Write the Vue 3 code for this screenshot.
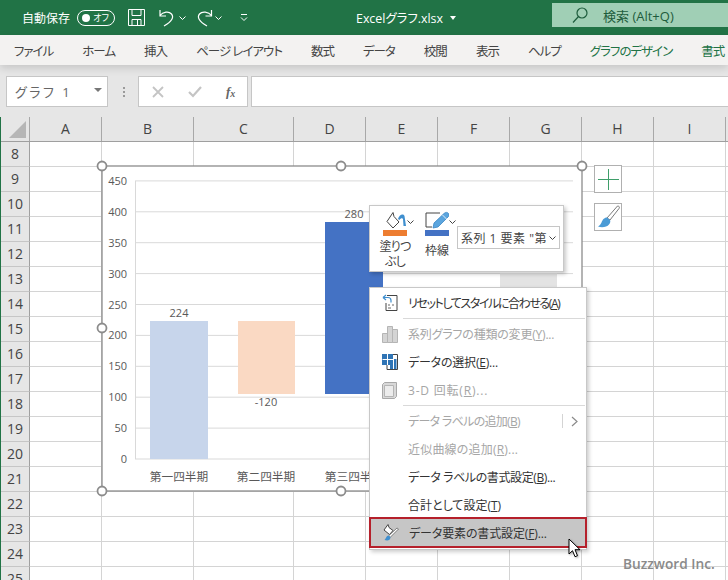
<script setup>
const tabs = [
  { name: "ファイル" },
  { name: "ホーム" },
  { name: "挿入" },
  { name: "ページ レイアウト" },
  { name: "数式" },
  { name: "データ" },
  { name: "校閲" },
  { name: "表示" },
  { name: "ヘルプ" },
  { name: "グラフのデザイン", accent: true },
  { name: "書式", accent: true },
];

const columns = ["A", "B", "C", "D", "E", "F", "G", "H", "I", ""];
const rows = [8, 9, 10, 11, 12, 13, 14, 15, 16, 17, 18, 19, 20, 21, 22, 23, 24, 25];

const axis = [450, 400, 350, 300, 250, 200, 150, 100, 50, 0];
const axisY = (v) => 459 - (v / 50) * 30.9;

const bars = [
  { x: 150, y: 321, w: 58, h: 138, color: "#c7d5eb" },
  { x: 238, y: 321, w: 57, h: 73, color: "#fad9c3" },
  { x: 325, y: 222, w: 58, h: 172, color: "#4472c4" },
  { x: 500, y: 273, w: 57, h: 60, color: "#e3e3e3" },
];

const labels = [
  { x: 179, y: 317, text: "224" },
  { x: 266, y: 406, text: "-120" },
  { x: 354, y: 218, text: "280" },
];

const categories = [
  { x: 179, text: "第一四半期" },
  { x: 266, text: "第二四半期" },
  { x: 354, text: "第三四半期" },
];

const handles = [
  [102, 166],
  [341, 166],
  [582, 166],
  [102, 328],
  [102, 491],
  [341, 491],
];

// track = letter spacing in px, the kana heavy rows run narrower in the original
const menu = [
  { icon: "reset", text: "リセットしてスタイルに合わせる(", key: "A", tail: ")", track: -1.4 },
  { sep: true },
  { icon: "bars", text: "系列グラフの種類の変更(", key: "Y", tail: ")...", off: true, track: -0.2 },
  { icon: "table", text: "データの選択(", key: "E", tail: ")...", track: -0.2 },
  { icon: "box", text: "3-D 回転(", key: "R", tail: ")...", off: true, track: 0.8 },
  { sep: true },
  { text: "データ ラベルの追加(", key: "B", tail: ")", off: true, sub: true, track: -0.7 },
  { text: "近似曲線の追加(", key: "R", tail: ")...", off: true, track: 0.2 },
  { text: "データ ラベルの書式設定(", key: "B", tail: ")...", track: -0.4 },
  { text: "合計として設定(", key: "T", tail: ")" },
  { icon: "format", text: "データ要素の書式設定(", key: "F", tail: ")...", active: true, track: -0.13 },
];
</script>

<template>
  <div class="app">
    <header class="titlebar">
      <span class="autosave">自動保存</span>
      <span class="toggle"><i class="dot"></i><span class="toggle-text">オフ</span></span>
      <svg class="qa save" width="17" height="17" viewBox="0 0 17 17" fill="none" stroke="#fff">
        <path d="M.5.5h16v16H.5z" />
        <path d="M4 .5v6h9v-6M4 16.500v-6h9v6M9.500 11v5" />
      </svg>
      <svg class="qa undo" width="16" height="18" viewBox="0 0 16 18" fill="none" stroke="#fff" stroke-width="1.200">
        <path d="M2 1v6h6M2 6.500C5 2.500 11 2 13.500 5c2.500 3 1 7-7.500 12" />
      </svg>
      <svg class="chev c1" width="7" height="4" viewBox="0 0 7 4" fill="none" stroke="#fff"><path d="M.5.5l3 3 3-3" /></svg>
      <svg class="qa redo" width="16" height="18" viewBox="0 0 16 18" fill="none" stroke="#fff" stroke-width="1.200">
        <path d="M14.500 1v6h-6M14.500 6.500C11.500 2.500 5 2 2.500 5c-2.500 3-1 7 7.500 12" />
      </svg>
      <svg class="chev c2" width="7" height="4" viewBox="0 0 7 4" fill="none" stroke="#fff"><path d="M.5.5l3 3 3-3" /></svg>
      <svg class="chev c3" width="8" height="7" viewBox="0 0 8 7" fill="none" stroke="#fff"><path d="M1 .5h6M1 3.500l3 3 3-3" /></svg>
      <span class="filename">Excelグラフ.xlsx</span>
      <i class="file-caret"></i>
      <div class="search">
        <svg width="16" height="17" viewBox="0 0 16 17" fill="none" stroke="#1d5c3c" stroke-width="1.200">
          <circle cx="10" cy="6" r="5" />
          <path d="M6.500 9.500L1 15.500" />
        </svg>
        <span>検索 (Alt+Q)</span>
      </div>
    </header>

    <nav class="tabs">
      <span v-for="tab in tabs" :key="tab.name" class="tab" :class="{ accent: tab.accent }">{{ tab.name }}</span>
    </nav>

    <section class="formula">
      <div class="namebox">
        <span>グラフ 1</span>
        <i class="name-caret"></i>
      </div>
      <div class="grip"><i></i><i></i><i></i></div>
      <div class="fxbox">
        <svg width="12" height="12" viewBox="0 0 12 12" fill="none" stroke="#c4c4c4" stroke-width="1.800"><path d="M1 1l10 10M11 1L1 11" /></svg>
        <svg width="14" height="12" viewBox="0 0 14 12" fill="none" stroke="#c4c4c4" stroke-width="2.200"><path d="M1 6l4 4 8-9" /></svg>
        <span class="fx">f<sub>x</sub></span>
      </div>
      <div class="input"></div>
    </section>

    <main class="sheet">
      <div class="col-head">
        <div class="corner"><i></i></div>
        <div v-for="col in columns" :key="col" class="col">{{ col }}</div>
      </div>
      <div v-for="row in rows" :key="row" class="row">
        <div class="row-num">{{ row }}</div>
        <div v-for="col in columns" :key="col" class="cell"></div>
      </div>

      <svg class="chart" viewBox="96 160 492 337">
        <rect x="102" y="166" width="480" height="325" fill="#fff" stroke="#8c8c8c" stroke-width="1.300" />
        <line v-for="v in axis" :key="v" x1="135" x2="573" :y1="axisY(v)" :y2="axisY(v)" stroke="#d9d9d9" />
        <line x1="135.500" x2="135.500" y1="181" y2="459" stroke="#d9d9d9" />
        <text v-for="v in axis" :key="'a' + v" class="tick" x="127" :y="axisY(v) + 4" text-anchor="end">{{ v }}</text>
        <rect v-for="b in bars" :key="b.x" :x="b.x" :y="b.y" :width="b.w" :height="b.h" :fill="b.color" />
        <text v-for="l in labels" :key="l.text" class="tick" :x="l.x" :y="l.y" text-anchor="middle">{{ l.text }}</text>
        <text v-for="c in categories" :key="c.text" class="cat" :x="c.x" y="481" text-anchor="middle">{{ c.text }}</text>
        <circle v-for="h in handles" :key="h.join()" :cx="h[0]" :cy="h[1]" r="4.500" fill="#fff" stroke="#8c8c8c" stroke-width="1.800" />
      </svg>

      <button class="side plus">
        <svg width="21" height="21" viewBox="0 0 21 21" stroke="#3f9e6a"><path d="M10.500 0v21M0 10.500h21" /></svg>
      </button>
      <button class="side brush">
        <svg width="25" height="25" viewBox="0 0 25 25">
          <path d="M21.500 1C23 1 24 2 23 3.500L14 15l-3-2z" fill="#fff" stroke="#6b6b6b" stroke-width=".9" />
          <path d="M11 12.500c-3 0-4.500 2.500-5.500 5-.5 1.500-2 3-3.500 4 4 1.500 9 .5 11-2 1.500-1.500 1.500-4 1-4.500z" fill="#4a9bd6" />
        </svg>
      </button>
    </main>

    <div class="mini">
      <div class="mini-btn fill">
        <svg width="24" height="25" viewBox="0 0 24 25">
          <path d="M4 10.500L10 1.500l1 4 5 5.500-6 6z" fill="#fff" stroke="#444" />
          <path d="M15 8c1-4 5-6 6.500-3L23 15h-2.500L20 8c-.5-1.500-2.500-1-3.500 1z" fill="#3f8fcf" />
          <rect y="19" width="24" height="6" fill="#ed7d31" />
        </svg>
        <span class="mini-label">塗りつ<br />ぶし</span>
      </div>
      <svg class="mini-chev first" width="7" height="4" viewBox="0 0 7 4" fill="none" stroke="#444"><path d="M.5.5l3 3 3-3" /></svg>
      <div class="mini-btn line">
        <svg width="24" height="25" viewBox="0 0 24 25">
          <path d="M15 2H1v14h6" fill="none" stroke="#444" />
          <path d="M8 17l1-5L19 2.500c1.500-1.500 3.500-1.500 4.500 0s.5 2.500-.5 3.500L13 16z" fill="#5ba5de" stroke="#3b87c4" stroke-width=".8" />
          <path d="M17.500 4l4 4" stroke="#fff" stroke-width=".8" />
          <rect y="19" width="24" height="6" fill="#4472c4" />
        </svg>
        <span class="mini-label">枠線</span>
      </div>
      <svg class="mini-chev second" width="7" height="4" viewBox="0 0 7 4" fill="none" stroke="#444"><path d="M.5.5l3 3 3-3" /></svg>
      <div class="mini-select">
        <span>系列 1 要素 "第</span>
        <svg width="7" height="4" viewBox="0 0 7 4" fill="none" stroke="#444"><path d="M.5.5l3 3 3-3" /></svg>
      </div>
    </div>

    <ul class="menu">
      <template v-for="(item, i) in menu" :key="i">
        <li v-if="item.sep" class="sep"></li>
        <li v-else class="item" :class="{ disabled: item.off, active: item.active }">
          <span class="item-icon">
            <svg v-if="item.icon === 'reset'" width="16" height="18" viewBox="0 0 16 18" fill="none">
              <path d="M5 1.500h10v15H4V9" stroke="#444" />
              <path d="M6 11h2M10 11h2M6 14h3" stroke="#666" />
              <path d="M1 3.500L4 1M1 3.500L4 6M1.500 3.500H6c2 0 3 1 3 3v2" stroke="#3f8fcf" stroke-width="1.200" />
            </svg>
            <svg v-else-if="item.icon === 'bars'" width="16" height="17" viewBox="0 0 16 17">
              <path d="M.5 7.500h5v9h-5zM5.500.5h5v16h-5zM10.500 3.500h5v13h-5z" fill="#d4d4d4" stroke="#b5b5b5" />
            </svg>
            <svg v-else-if="item.icon === 'table'" width="16" height="16" viewBox="0 0 16 16">
              <path d="M0 0h11v11H0z" fill="#2f74b5" />
              <path d="M.5 5.500h10.500M5.500 0v11" stroke="#fff" />
              <path d="M11 .5h4.500v15H5V11" fill="none" stroke="#444" />
              <path d="M8 10h3v5H8z" fill="#2f74b5" />
              <path d="M12 5h2.500v10H12z" fill="#2f74b5" />
            </svg>
            <svg v-else-if="item.icon === 'box'" width="15" height="17" viewBox="0 0 15 17">
              <path d="M.5 2.500l2-2h12v14l-2 2H.5z" fill="#d8d8d8" stroke="#a8a8a8" />
              <path d="M2.500 3.500h9v11h-9z" fill="#ececec" stroke="#b5b5b5" />
            </svg>
            <svg v-else-if="item.icon === 'format'" width="16" height="17" viewBox="0 0 16 17">
              <path d="M1 6l4-5.500 1 3 4 3-3.500 4z" fill="#fff" stroke="#444" />
              <path d="M15.500 5L7 13.500l-1.500-1.500L14 4z" fill="#fff" stroke="#555" stroke-width=".7" />
              <path d="M5.500 11.500c-2 0-2.500 3-4 4.500 3 1 6 .5 6-3z" fill="#3f8fcf" />
            </svg>
          </span>
          <span class="item-text" :style="{ letterSpacing: (item.track || 0) + 'px' }">{{ item.text }}<u>{{ item.key }}</u>{{ item.tail }}</span>
          <span v-if="item.sub" class="item-sub">
            <svg width="7" height="11" viewBox="0 0 7 11" fill="none" stroke="#8a8a8a" stroke-width="1.200"><path d="M1 1l5 4.500L1 10" /></svg>
          </span>
        </li>
      </template>
    </ul>

    <svg class="cursor" width="14" height="20" viewBox="0 0 14 20">
      <path d="M1 1v15l3.500-3.300 2.500 6 2.500-1-2.500-6H12z" fill="#fff" stroke="#000" />
    </svg>
    <span class="mark">Buzzword Inc.</span>
  </div>
</template>

<style scoped>
.app {
  position: relative;
  width: 728px;
  height: 580px;
  overflow: hidden;
  background: #e6e6e6;
  font-family: "Open Sans", "Noto Sans CJK JP", sans-serif;
  font-feature-settings: "palt";
  color: #333;
}

.titlebar {
  display: flex;
  align-items: center;
  height: 35px;
  padding-left: 22px;
  background: #217346;
  color: #fff;
  font-size: 12px;
}
.autosave {
  width: 55px;
}
.toggle {
  display: flex;
  align-items: center;
  justify-content: space-between;
  box-sizing: border-box;
  width: 38px;
  height: 16px;
  padding: 0 5px 0 4px;
  border: 1px solid #fff;
  border-radius: 8px;
}
.dot {
  width: 8px;
  height: 8px;
  border-radius: 50%;
  background: #fff;
}
.toggle-text {
  font-size: 9px;
}
.qa.save {
  margin-left: 13px;
}
.qa.undo {
  margin-left: 13px;
}
.c1 {
  margin-left: 5px;
}
.qa.redo {
  margin-left: 11px;
}
.c2 {
  margin-left: 2px;
}
.c3 {
  margin-left: 18px;
}
.filename {
  margin-left: 108px;
  font-size: 12.400px;
}
.file-caret {
  width: 0;
  height: 0;
  margin: 1px 0 0 7px;
  border: 3px solid transparent;
  border-top: 4px solid #fff;
  border-bottom: 0;
}
.search {
  display: flex;
  align-items: center;
  gap: 15px;
  height: 24px;
  margin-left: auto;
  margin-top: -5px;
  padding-left: 20px;
  width: 156px;
  background: #a0cfb5;
  color: #1d5c3c;
  font-size: 13px;
}

.tabs {
  display: flex;
  align-items: center;
  gap: 29px;
  height: 30px;
  padding-left: 14px;
  background: #f3f2f1;
  box-shadow: 0 3px 8px rgba(0, 0, 0, 0.14);
  font-size: 12.500px;
  letter-spacing: -1px;
  color: #444;
  white-space: nowrap;
  position: relative;
}
.tab.accent {
  color: #217346;
}

.formula {
  display: flex;
  align-items: stretch;
  height: 31px;
  padding: 11px 0 10px 6px;
}
.namebox {
  display: flex;
  align-items: center;
  justify-content: space-between;
  box-sizing: border-box;
  width: 102px;
  padding: 0 5px 0 8px;
  background: #fff;
  border: 1px solid #c6c6c6;
  font-size: 13px;
  letter-spacing: 2.500px;
  color: #666;
}
.name-caret {
  width: 0;
  height: 0;
  margin-bottom: 4px;
  border: 4px solid transparent;
  border-top: 4px solid #777;
  border-bottom: 0;
}
.grip {
  display: flex;
  flex-direction: column;
  justify-content: center;
  gap: 2px;
  width: 30px;
  padding-left: 15px;
  box-sizing: border-box;
}
.grip i {
  width: 2px;
  height: 2px;
  background: #9a9a9a;
}
.fxbox {
  display: flex;
  align-items: center;
  box-sizing: border-box;
  width: 110px;
  padding-left: 13px;
  gap: 24px;
  background: #fff;
  border: 1px solid #c6c6c6;
}
.fx {
  font-family: "Liberation Serif", serif;
  font-style: italic;
  font-weight: 700;
  font-size: 13px;
  color: #666;
}
.fx sub {
  font-size: 10px;
  vertical-align: -1px;
}
.input {
  flex: 1;
  margin-left: 3px;
  background: #fff;
  border: 1px solid #c6c6c6;
  border-right: 0;
}

.sheet {
  position: relative;
  height: 473px;
  border-left: 1px solid #217346;
  --cols: 29px 72px 92px 100px 72px 72px 72px 72px 72px 72px 3px;
}
.col-head,
.row {
  display: grid;
  grid-template-columns: var(--cols);
}
.col-head {
  height: 24px;
  border-bottom: 1px solid #9f9f9f;
}
.corner {
  position: relative;
  border-right: 1px solid #a8a8a8;
}
.corner i {
  position: absolute;
  right: 3px;
  bottom: 3px;
  width: 0;
  height: 0;
  border-style: solid;
  border-width: 0 0 17px 17px;
  border-color: transparent transparent #b6b6b6 transparent;
}
.col {
  border-right: 1px solid #a8a8a8;
  text-align: center;
  font-size: 14px;
  line-height: 24px;
  color: #444;
}
.row {
  height: 25px;
}
.row-num {
  box-sizing: border-box;
  border-right: 1px solid #a0a0a0;
  border-bottom: 1px solid #c6c6c6;
  text-align: center;
  font-size: 14px;
  line-height: 24px;
  color: #444;
  background: #e6e6e6;
}
.cell {
  box-sizing: border-box;
  background: #fff;
  border-right: 1px solid #d4d4d4;
  border-bottom: 1px solid #d4d4d4;
}

.chart {
  position: absolute;
  left: 95px;
  top: 43px;
  width: 492px;
  height: 337px;
}
.tick {
  font-size: 11px;
  fill: #595959;
}
.cat {
  font-size: 11.700px;
  fill: #595959;
}

.side {
  position: absolute;
  left: 593px;
  width: 28px;
  height: 28px;
  display: flex;
  align-items: center;
  justify-content: center;
  padding: 0;
  background: #fff;
  border: 1px solid #b0b0b0;
}
.plus {
  top: 48px;
}
.brush {
  top: 86px;
}

.mini {
  position: absolute;
  left: 369px;
  top: 205px;
  display: flex;
  box-sizing: border-box;
  width: 195px;
  height: 67px;
  padding-left: 11px;
  background: #fff;
  border: 1px solid #c8c8c8;
  box-shadow: 2px 2px 4px rgba(0, 0, 0, 0.22);
  font-size: 12px;
  color: #444;
}
.mini-btn {
  display: flex;
  flex-direction: column;
  align-items: center;
  width: 28px;
  padding-top: 5px;
  line-height: 15px;
  text-align: center;
}
.mini-label {
  margin-top: 3px;
  letter-spacing: -0.8px;
  white-space: nowrap;
}
.line .mini-label {
  margin-top: 7px;
  letter-spacing: 0;
}
.mini-chev {
  margin-top: 14px;
}
.mini-chev.first {
  margin-left: -2px;
  margin-right: 9px;
}
.mini-chev.second {
  margin-left: -2px;
  margin-right: 1px;
}
.mini-select {
  display: flex;
  align-items: center;
  justify-content: space-between;
  box-sizing: border-box;
  width: 103px;
  height: 23px;
  margin-top: 20px;
  padding: 0 3px 0 3px;
  border: 1px solid #c6c6c6;
  letter-spacing: 0.500px;
  white-space: nowrap;
}

.menu {
  position: absolute;
  left: 369px;
  top: 287px;
  box-sizing: border-box;
  width: 218px;
  height: 263px;
  margin: 0;
  padding: 1px 0 0;
  list-style: none;
  background: #fff;
  border: 1px solid #c8c8c8;
  box-shadow: 2px 2px 4px rgba(0, 0, 0, 0.2);
  font-size: 12px;
  color: #333;
}
.item {
  display: flex;
  align-items: center;
  height: 28px;
  white-space: nowrap;
}
.item.disabled {
  color: #a6a6a6;
}
.item.active {
  box-sizing: border-box;
  height: 31px;
  margin: -2px -1px 0;
  background: #c6c6c6;
  border: 2.500px solid #b5202b;
}
.item-icon {
  display: flex;
  align-items: center;
  justify-content: center;
  flex: none;
  width: 38px;
  padding-left: 1px;
  box-sizing: border-box;
}
.item-sub {
  display: flex;
  align-items: center;
  height: 14px;
  margin-left: auto;
  padding: 0 8px;
  border-left: 1px solid #d4d4d4;
}
.sep {
  height: 1px;
  margin: 1px 1px 1px 33px;
  background: #d9d9d9;
}

.cursor {
  position: absolute;
  left: 568px;
  top: 538px;
  filter: drop-shadow(1px 1px 1px rgba(0, 0, 0, 0.3));
}
.mark {
  position: absolute;
  left: 623px;
  top: 554px;
  font-size: 13.700px;
  font-weight: 600;
  color: #8a8a8a;
  white-space: nowrap;
  font-family: "Open Sans", sans-serif;
}
</style>

<style>
html,
body {
  margin: 0;
}
</style>
